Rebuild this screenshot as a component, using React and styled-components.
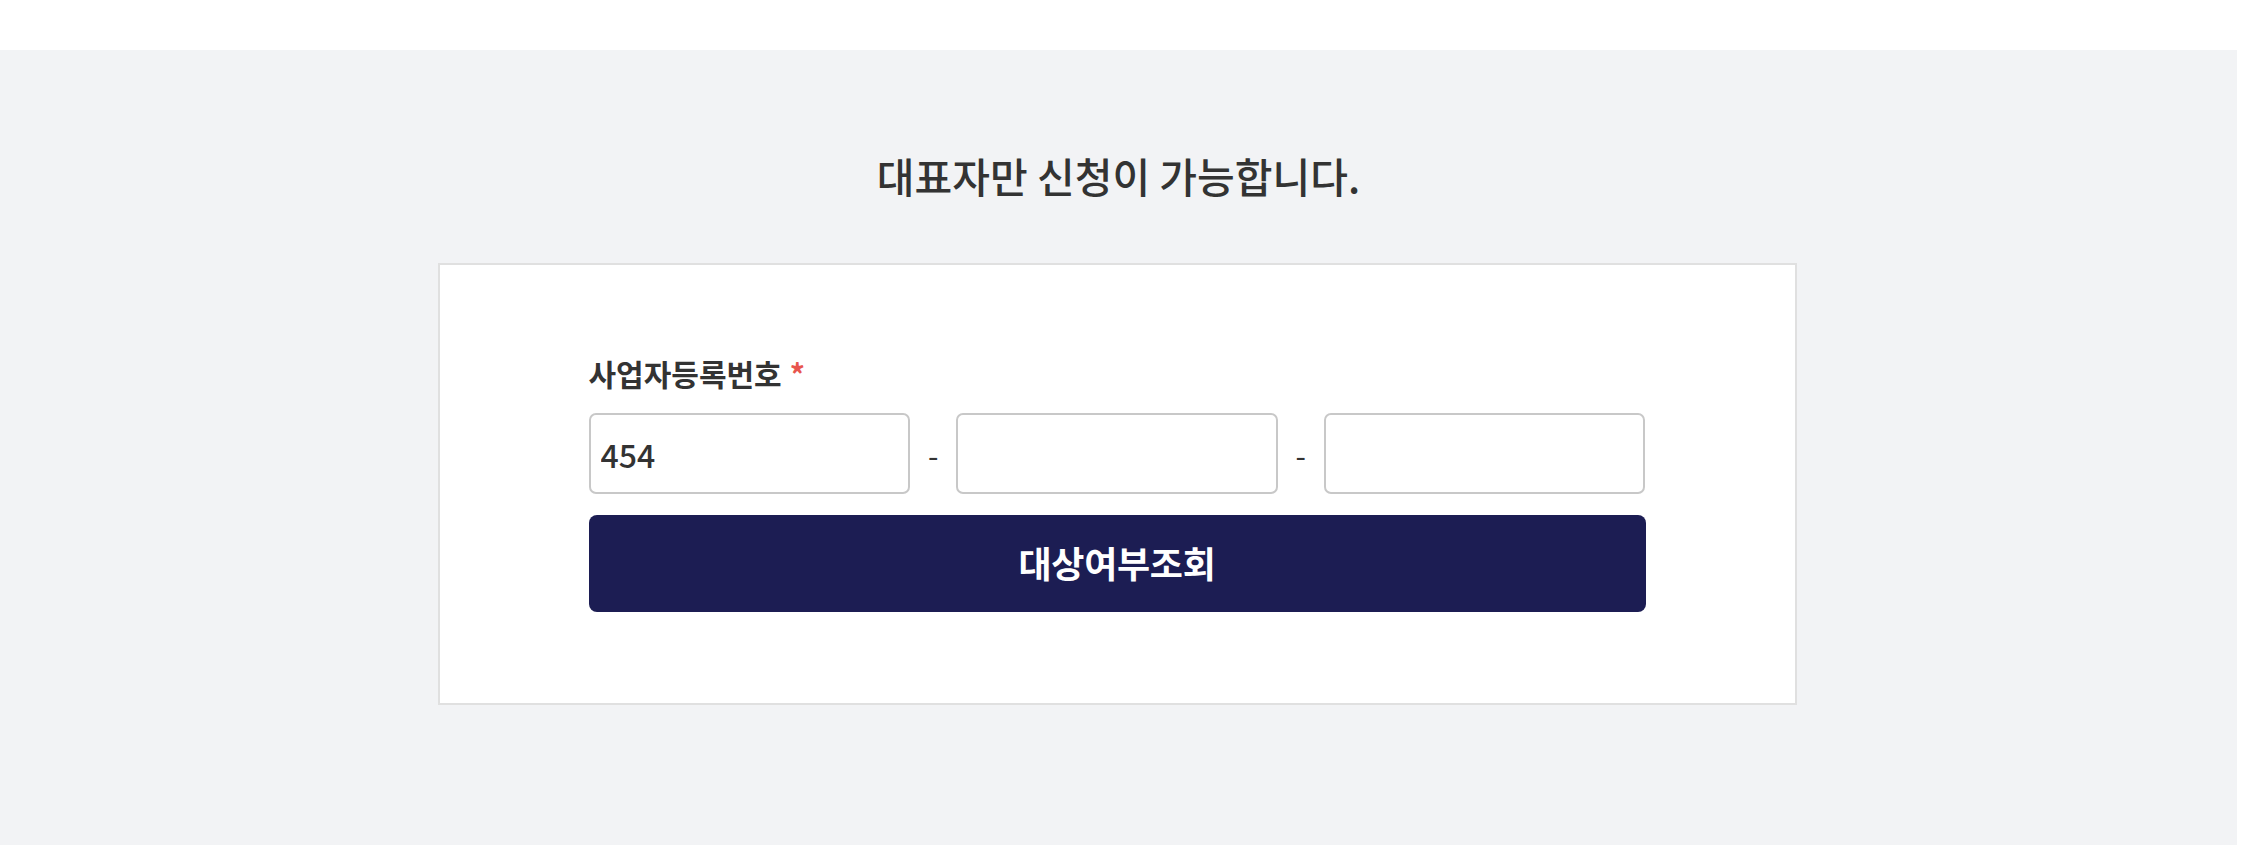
import React from 'react'
import styled, {createGlobalStyle} from 'styled-components'

const GlobalStyle = createGlobalStyle`
  html, body {
    margin: 0;
    padding: 0;
    background: #fff;
  }
  body {
    font-family: "Noto Sans CJK KR", "Noto Sans", sans-serif;
    color: #333;
  }
`

const Header = styled.header`
  height: 50px;
  background: #fff;
`

const Section = styled.section`
  width: calc(100% - 9px);
  height: 795px;
  background: #f2f3f5;
  display: flex;
  flex-direction: column;
  align-items: center;
`

const Title = styled.h2`
  margin: 98px 0 61px;
  font-size: 41px;
  line-height: 54px;
  font-weight: 500;
  letter-spacing: 0;
  color: #333;
`

const Card = styled.div`
  width: 1359px;
  box-sizing: border-box;
  margin-right: 3px;
  background: #fff;
  border: 2px solid #e0e0e0;
  padding: 88px 0 91px;
  display: flex;
  justify-content: center;
`

const Form = styled.div`
  width: 1057px;
  display: flex;
  flex-direction: column;
`

const Label = styled.label`
  font-size: 30px;
  line-height: 40px;
  font-weight: 700;
  letter-spacing: 0;
  color: #333;
  margin-bottom: 20px;
`

const Required = styled.span`
  color: #e8554e;
  margin-left: 8px;
`

const InputRow = styled.div`
  display: grid;
  grid-template-columns: 1fr 46px 1fr 46px 1fr;
  align-items: center;
`

const Input = styled.input`
  height: 81px;
  box-sizing: border-box;
  width: 100%;
  border: 2px solid #c8c8c8;
  border-radius: 7px;
  padding: 0 10px;
  font-family: "Noto Sans CJK KR", "Noto Sans", sans-serif;
  font-size: 32px;
  font-weight: 500;
  color: #333;
  background: #fff;
  outline: none;
`

const Dash = styled.span`
  text-align: center;
  font-size: 30px;
  color: #333;
`

const Button = styled.button`
  margin-top: 21px;
  height: 97px;
  padding: 0 0 4px;
  border: none;
  border-radius: 8px;
  background: #1c1d53;
  color: #fff;
  font-family: "Noto Sans CJK KR", "Noto Sans", sans-serif;
  font-size: 36px;
  font-weight: 700;
  letter-spacing: -0.3px;
  cursor: pointer;
`

const App = () => (
  <>
    <GlobalStyle />
    <Header />
    <Section>
      <Title>대표자만 신청이 가능합니다.</Title>
      <Card>
        <Form>
          <Label>
            사업자등록번호<Required>*</Required>
          </Label>
          <InputRow>
            <Input defaultValue="454" />
            <Dash>-</Dash>
            <Input />
            <Dash>-</Dash>
            <Input />
          </InputRow>
          <Button>대상여부조회</Button>
        </Form>
      </Card>
    </Section>
  </>
)

export default App
